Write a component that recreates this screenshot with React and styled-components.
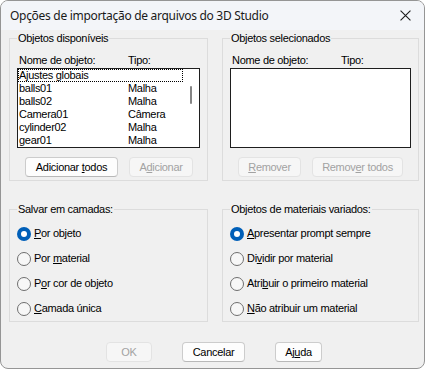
import React from 'react';
import styled, { createGlobalStyle } from 'styled-components';

const GlobalStyle = createGlobalStyle`
	html, body {
		margin: 0;
		background: #ffffff;
	}
	* {
		box-sizing: border-box;
	}
`;

const objetos = [
	{ nome: 'Ajustes globais', tipo: '', foco: true },
	{ nome: 'balls01', tipo: 'Malha' },
	{ nome: 'balls02', tipo: 'Malha' },
	{ nome: 'Camera01', tipo: 'Câmera' },
	{ nome: 'cylinder02', tipo: 'Malha' },
	{ nome: 'gear01', tipo: 'Malha' },
];

// texto com a letra de atalho sublinhada
function Rotulo({ texto, atalho }) {
	if (atalho == null) return texto;
	return (
		<>
			{texto.slice(0, atalho)}
			<u>{texto[atalho]}</u>
			{texto.slice(atalho + 1)}
		</>
	);
}

function Radio({ texto, atalho, marcado }) {
	return (
		<RadioLinha>
			<Circulo $marcado={marcado} />
			<span>
				<Rotulo texto={texto} atalho={atalho} />
			</span>
		</RadioLinha>
	);
}

export default function App() {
	return (
		<>
			<GlobalStyle />
			<Janela>
				<BarraTitulo>
					<Titulo>Opções de importação de arquivos do 3D Studio</Titulo>
					<Fechar viewBox="0 0 10 10" width="11" height="11">
						<path d="M0.5 0.5 L9.5 9.5 M9.5 0.5 L0.5 9.5" stroke="#1b1b1b" strokeWidth="1" fill="none" />
					</Fechar>
				</BarraTitulo>
				<Corpo>
					<LinhaGrupos>
						<Grupo $altura={143}>
							<Legenda>Objetos disponíveis</Legenda>
							<Cabecalho>
								<Coluna>Nome de objeto:</Coluna>
								<span>Tipo:</span>
							</Cabecalho>
							<Lista>
								<Itens>
									{objetos.map((o) => (
										<Item key={o.nome} $foco={o.foco}>
											<Coluna>{o.nome}</Coluna>
											<span>{o.tipo}</span>
										</Item>
									))}
								</Itens>
								<Rolagem>
									<Polegar />
								</Rolagem>
							</Lista>
							<LinhaBotoes>
								<Botao style={{ width: 93 }}>
									<Rotulo texto="Adicionar todos" atalho={10} />
								</Botao>
								<Botao disabled style={{ width: 64 }}>
									<Rotulo texto="Adicionar" atalho={1} />
								</Botao>
							</LinhaBotoes>
						</Grupo>
						<Grupo $altura={143}>
							<Legenda>Objetos selecionados</Legenda>
							<Cabecalho>
								<Coluna>Nome de objeto:</Coluna>
								<span>Tipo:</span>
							</Cabecalho>
							<Lista />
							<LinhaBotoes>
								<Botao disabled style={{ width: 63 }}>
									<Rotulo texto="Remover" atalho={0} />
								</Botao>
								<Botao disabled style={{ width: 91 }}>
									<Rotulo texto="Remover todos" atalho={5} />
								</Botao>
							</LinhaBotoes>
						</Grupo>
					</LinhaGrupos>
					<LinhaGrupos $topo={22}>
						<Grupo $altura={113}>
							<Legenda>Salvar em camadas:</Legenda>
							<Radios>
								<Radio texto="Por objeto" atalho={0} marcado />
								<Radio texto="Por material" atalho={4} />
								<Radio texto="Por cor de objeto" atalho={1} />
								<Radio texto="Camada única" atalho={0} />
							</Radios>
						</Grupo>
						<Grupo $altura={113}>
							<Legenda>Objetos de materiais variados:</Legenda>
							<Radios>
								<Radio texto="Apresentar prompt sempre" atalho={0} marcado />
								<Radio texto="Dividir por material" atalho={2} />
								<Radio texto="Atribuir o primeiro material" atalho={4} />
								<Radio texto="Não atribuir um material" atalho={0} />
							</Radios>
						</Grupo>
					</LinhaGrupos>
					<Rodape>
						<Botao disabled style={{ width: 46 }}>OK</Botao>
						<Botao style={{ width: 63 }}>Cancelar</Botao>
						<Botao style={{ width: 47 }}>
							<Rotulo texto="Ajuda" atalho={2} />
						</Botao>
					</Rodape>
				</Corpo>
			</Janela>
		</>
	);
}

const Janela = styled.div`
	width: 425px;
	height: 369px;
	border: 1px solid #959595;
	border-radius: 8px;
	overflow: hidden;
	background: #f0f0f0;
	display: flex;
	flex-direction: column;
	font-family: 'Liberation Sans', Arial, sans-serif;
	font-size: 11px;
	letter-spacing: -0.3px;
	color: #000;
`;

const BarraTitulo = styled.div`
	height: 29px;
	flex: none;
	display: flex;
	align-items: center;
	justify-content: space-between;
	padding: 0 13px 1px 9px;
	background: #f3f5f9;
`;

const Titulo = styled.span`
	font-family: 'Noto Sans', 'Open Sans', sans-serif;
	font-size: 12px;
	letter-spacing: -0.3px;
	color: #1a1a1a;
`;

const Fechar = styled.svg`
	display: block;
`;

const Corpo = styled.div`
	flex: 1;
	display: flex;
	flex-direction: column;
	padding: 2px 6px 0 8px;
`;

const LinhaGrupos = styled.div`
	display: grid;
	grid-template-columns: 199px 197px;
	column-gap: 14px;
	margin-top: ${(p) => p.$topo || 0}px;
`;

const Grupo = styled.fieldset`
	margin: 0;
	height: ${(p) => p.$altura + 6}px;
	border: 1px solid #dcdcdc;
	padding: 0 7px 0 7px;
	display: flex;
	flex-direction: column;
	min-width: 0;
`;

const Legenda = styled.legend`
	padding: 0 1px;
	margin-left: 0;
	line-height: 13px;
	color: #000;
`;

const Cabecalho = styled.div`
	display: flex;
	margin-top: 9px;
	padding-left: 2px;
	line-height: 13px;
`;

const Coluna = styled.span`
	width: 109px;
	flex: none;
`;

const Lista = styled.div`
	margin-top: 1px;
	height: 80px;
	border: 1px solid #1e1e1e;
	background: #ffffff;
	display: flex;
`;

const Itens = styled.div`
	flex: 1;
	display: flex;
	flex-direction: column;
`;

const Item = styled.div`
	display: flex;
	height: 13px;
	line-height: 13px;
	padding-left: 1px;
	outline: ${(p) => (p.$foco ? '1px dotted #000' : 'none')};
	outline-offset: -1px;
`;

const Rolagem = styled.div`
	width: 16px;
	flex: none;
	display: flex;
	justify-content: center;
	padding-top: 17px;
`;

const Polegar = styled.div`
	width: 2px;
	height: 18px;
	border-radius: 1px;
	background: #858585;
`;

const LinhaBotoes = styled.div`
	display: flex;
	gap: 11px;
	margin-top: 9px;
	padding-left: 8px;
`;

const Botao = styled.button`
	height: 20px;
	padding: 0;
	border: 1px solid ${(p) => (p.disabled ? '#e3e3e3' : '#cccccc')};
	border-bottom-color: ${(p) => (p.disabled ? '#e3e3e3' : '#b8b8b8')};
	border-radius: 4px;
	background: ${(p) => (p.disabled ? '#f6f6f6' : '#fdfdfd')};
	color: ${(p) => (p.disabled ? '#a2a2a2' : '#000')};
	font-family: 'Liberation Sans', Arial, sans-serif;
	font-size: 11px;
	letter-spacing: -0.3px;
	line-height: 18px;
`;

const Radios = styled.div`
	display: flex;
	flex-direction: column;
	gap: 12px;
	margin-top: 11px;
`;

const RadioLinha = styled.div`
	display: flex;
	align-items: center;
	gap: 3px;
	height: 13px;
	line-height: 13px;
`;

const Circulo = styled.span`
	width: 14px;
	height: 14px;
	flex: none;
	border-radius: 50%;
	background: ${(p) => (p.$marcado ? '#005fb8' : '#f7f7f7')};
	border: ${(p) => (p.$marcado ? 'none' : '1px solid #6e6e6e')};
	display: flex;
	align-items: center;
	justify-content: center;
	&::after {
		content: '';
		display: ${(p) => (p.$marcado ? 'block' : 'none')};
		width: 6px;
		height: 6px;
		border-radius: 50%;
		background: #ffffff;
	}
`;

const Rodape = styled.div`
	display: flex;
	justify-content: flex-end;
	gap: 30px;
	margin-top: 20px;
	padding-right: 96px;
`;
